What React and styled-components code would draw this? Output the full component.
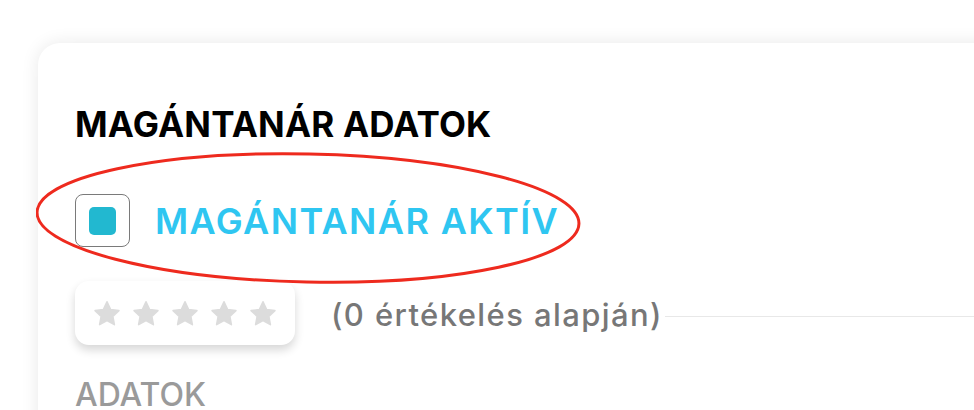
import styled, { createGlobalStyle } from "styled-components";

const GlobalStyle = createGlobalStyle`
  html, body {
    margin: 0;
    padding: 0;
    background: #ffffff;
    overflow: hidden;
  }
  body {
    font-family: Inter, "Noto Sans", sans-serif;
  }
`;

const Page = styled.div`
  width: 974px;
  height: 410px;
  padding: 43px 0 0 38px;
  box-sizing: border-box;
  overflow: hidden;
`;

const Card = styled.div`
  position: relative;
  width: 1000px;
  height: 420px;
  background: #ffffff;
  border-radius: 22px;
  box-shadow: 0 0 18px rgba(0, 0, 0, 0.09);
  padding: 59px 0 0 37px;
  box-sizing: border-box;
  display: flex;
  flex-direction: column;
`;

const Title = styled.h2`
  margin: 0;
  font-size: 35px;
  line-height: 44px;
  font-weight: 700;
  color: #000;
  letter-spacing: 0.2px;
`;

const ActiveRow = styled.label`
  display: flex;
  align-items: center;
  gap: 25px;
  margin-top: 48px;
`;

const Checkbox = styled.span`
  width: 55px;
  height: 53px;
  border: 1.5px solid #7a7a7a;
  border-radius: 8px;
  box-sizing: border-box;
  display: flex;
  align-items: center;
  justify-content: center;
`;

const CheckFill = styled.span`
  width: 27px;
  height: 28px;
  border-radius: 5px;
  background: #22b8d0;
`;

const ActiveText = styled.span`
  font-size: 36px;
  line-height: 44px;
  font-weight: 600;
  color: #2fc6f1;
  letter-spacing: 1.4px;
`;

const RatingRow = styled.div`
  display: flex;
  align-items: center;
  margin-top: 34px;
`;

const StarBox = styled.div`
  width: 220px;
  height: 64px;
  border-radius: 14px;
  background: #fff;
  box-shadow: 0 5px 10px rgba(0, 0, 0, 0.16);
  display: flex;
  align-items: center;
  justify-content: center;
  gap: 11px;
  flex-shrink: 0;
`;

const RatingText = styled.span`
  margin-left: 36px;
  font-size: 31px;
  line-height: 40px;
  font-weight: 500;
  color: #777777;
  letter-spacing: 1.4px;
  white-space: nowrap;
  padding-top: 4px;
`;

const Rule = styled.div`
  flex: 1;
  height: 1px;
  background: #e8e8e8;
  margin-left: 2px;
  margin-top: 6px;
`;

const Section = styled.h3`
  margin: 30px 0 0;
  font-size: 32px;
  line-height: 40px;
  font-weight: 500;
  color: #9a9a9a;
`;

const Annotation = styled.svg`
  position: absolute;
  left: -2px;
  top: 107px;
  pointer-events: none;
`;

function Star() {
  return (
    <svg width="28" height="27" viewBox="0 0 24 23">
      <path
        d="M12 1.5l3.1 6.6 7.1.9-5.2 4.9 1.3 7.1L12 17.6 5.7 21l1.3-7.1L1.8 9l7.1-.9z"
        fill="#dcdcdc"
        stroke="#dcdcdc"
        strokeWidth="1.4"
        strokeLinejoin="round"
      />
    </svg>
  );
}

export default function App() {
  return (
    <>
      <GlobalStyle />
      <Page>
        <Card>
          <Title>MAGÁNTANÁR ADATOK</Title>
          <ActiveRow>
            <Checkbox>
              <CheckFill />
            </Checkbox>
            <ActiveText>MAGÁNTANÁR AKTÍV</ActiveText>
          </ActiveRow>
          <RatingRow>
            <StarBox>
              {[0, 1, 2, 3, 4].map((i) => (
                <Star key={i} />
              ))}
            </StarBox>
            <RatingText>(0 értékelés alapján)</RatingText>
            <Rule />
          </RatingRow>
          <Section>ADATOK</Section>
          <Annotation width="560" height="140" viewBox="0 0 560 140">
            <ellipse
              cx="272"
              cy="68"
              rx="271"
              ry="64"
              transform="rotate(1.2 272 68)"
              fill="none"
              stroke="#ee2a1e"
              strokeWidth="3"
            />
          </Annotation>
        </Card>
      </Page>
    </>
  );
}
